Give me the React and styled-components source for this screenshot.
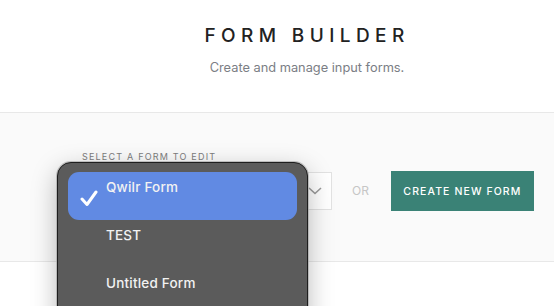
import styled, { createGlobalStyle } from "styled-components";

const GlobalStyle = createGlobalStyle`
  html, body {
    margin: 0;
    padding: 0;
    background: #ffffff;
    font-family: Inter, "Noto Sans", "Liberation Sans", sans-serif;
    overflow: hidden;
  }
`;

const forms = ["Qwilr Form", "TEST", "Untitled Form"];

const App = () => {
  return (
    <Page>
      <GlobalStyle />
      <Header>
        <Title>FORM BUILDER</Title>
        <Subtitle>Create and manage input forms.</Subtitle>
      </Header>
      <Band>
        <Row>
          <Field>
            <Label>SELECT A FORM TO EDIT</Label>
            <SelectBox>
              <Chevron width="14" height="8" viewBox="0 0 14 8">
                <path d="M1 1l6 5.5L13 1" fill="none" stroke="#9a9a9a" strokeWidth="1.6" />
              </Chevron>
            </SelectBox>
            <Menu>
              {forms.map((name, i) => (
                <MenuItem key={name} $active={i === 0}>
                  {i === 0 && (
                    <Check width="18" height="16" viewBox="0 0 18 16">
                      <path
                        d="M2 9l5 5.5L16 2"
                        fill="none"
                        stroke="#ffffff"
                        strokeWidth="3"
                        strokeLinecap="round"
                        strokeLinejoin="round"
                      />
                    </Check>
                  )}
                  <ItemText>{name}</ItemText>
                </MenuItem>
              ))}
            </Menu>
          </Field>
          <Or>OR</Or>
          <CreateButton>CREATE NEW FORM</CreateButton>
        </Row>
      </Band>
    </Page>
  );
};

export default App;

const Page = styled.div`
  width: 554px;
  height: 306px;
  overflow: hidden;
`;

const Header = styled.header`
  height: 112px;
  display: flex;
  flex-direction: column;
  align-items: center;
  padding-top: 25px;
  box-sizing: border-box;
  padding-left: 60px;
`;

const Title = styled.h1`
  margin: 0;
  font-size: 19px;
  font-weight: 500;
  letter-spacing: 5.4px;
  color: #222222;
  line-height: 22px;
`;

const Subtitle = styled.p`
  margin: 13px 0 0;
  font-size: 12.8px;
  color: #7b7e85;
  line-height: 16px;
`;

const Band = styled.section`
  height: 150px;
  box-sizing: border-box;
  background: #fafafa;
  border-top: 1px solid #e8e8e8;
  border-bottom: 1px solid #e8e8e8;
  padding: 38px 0 0 82px;
`;

const Row = styled.div`
  display: flex;
  align-items: flex-end;
`;

const Field = styled.div`
  position: relative;
  display: flex;
  flex-direction: column;
  width: 250px;
`;

const Label = styled.div`
  font-size: 9px;
  letter-spacing: 1.2px;
  color: #7d7d7d;
  line-height: 11px;
  margin-bottom: 10px;
`;

const SelectBox = styled.div`
  height: 38px;
  box-sizing: border-box;
  background: #ffffff;
  border: 1px solid #e2e2e2;
  display: flex;
  align-items: center;
  justify-content: flex-end;
  padding-right: 9px;
`;

const Chevron = styled.svg`
  display: block;
`;

const Menu = styled.div`
  position: absolute;
  left: -25px;
  top: 11px;
  width: 251px;
  height: 220px;
  box-sizing: border-box;
  background: #5b5b5b;
  border: 1px solid #1e1e1e;
  border-radius: 14px;
  box-shadow: 0 0 0 1px rgba(170, 170, 170, 0.7), 0 8px 26px rgba(0, 0, 0, 0.28);
  padding: 9px 10px;
`;

const MenuItem = styled.div`
  position: relative;
  height: 48px;
  border-radius: 11px;
  background: ${(p) => (p.$active ? "#618ae3" : "transparent")};
  padding: 4px 0 0 38px;
  box-sizing: border-box;
`;

const Check = styled.svg`
  position: absolute;
  left: 12px;
  top: 18px;
`;

const ItemText = styled.span`
  font-size: 13.5px;
  font-weight: 500;
  color: #f2f2f2;
  line-height: 18px;
  letter-spacing: 0.2px;
`;

const Or = styled.div`
  margin: 0 21px 11px 20px;
  font-size: 12px;
  color: #c6c6c6;
  line-height: 16px;
`;

const CreateButton = styled.button`
  width: 143px;
  height: 40px;
  margin-bottom: -1px;
  margin-left: 1px;
  border: none;
  background: #3a8276;
  color: #ffffff;
  font-family: inherit;
  font-size: 10.5px;
  font-weight: 500;
  letter-spacing: 1.1px;
  cursor: pointer;
`;
